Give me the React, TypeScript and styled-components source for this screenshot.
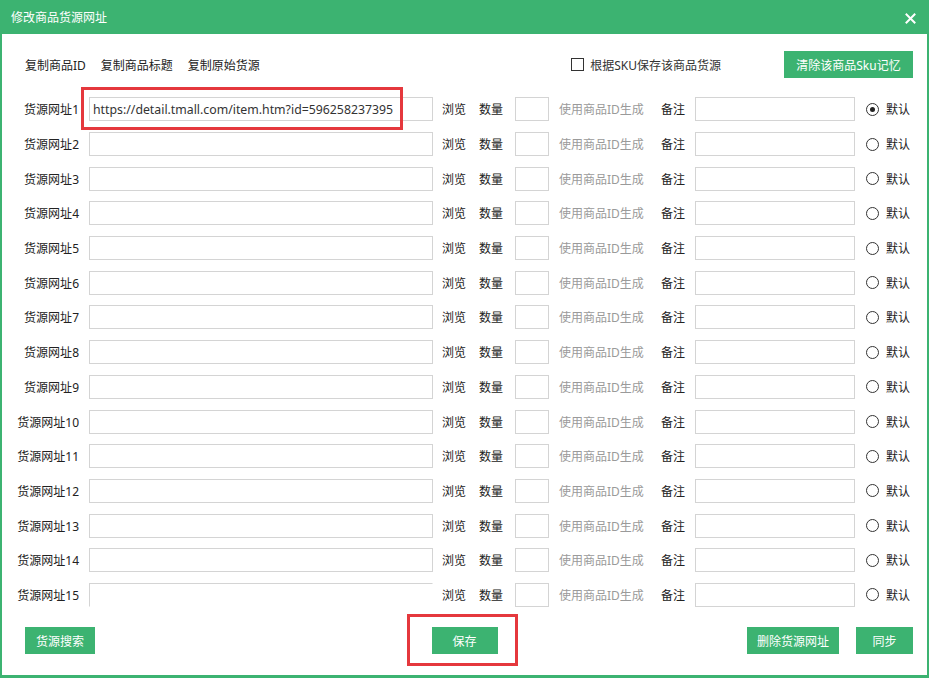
import React from 'react';
import styled, { createGlobalStyle } from 'styled-components';

const GlobalStyle = createGlobalStyle`
  html, body {
    margin: 0;
    padding: 0;
    background: #fff;
  }
  body {
    font-family: "Noto Sans", "Noto Sans CJK SC", sans-serif;
    font-size: 12px;
    color: #333;
  }
`;

const GREEN = '#3cb371';

const Window = styled.div`
  width: 929px;
  height: 678px;
  box-sizing: border-box;
  display: flex;
  flex-direction: column;
  background: ${GREEN};
  padding: 0 2px 3px 2px;
  overflow: hidden;
`;

const TitleBar = styled.div`
  height: 34px;
  flex-shrink: 0;
  display: flex;
  align-items: center;
  justify-content: space-between;
  padding: 0 11px 0 9px;
  color: #fff;
  font-size: 12px;
`;

const CloseButton = styled.div`
  width: 12px;
  height: 12px;
  display: flex;
  align-items: center;
  justify-content: center;
  margin-top: 2px;
`;

const Body = styled.div`
  flex: 1;
  background: #fff;
  display: flex;
  flex-direction: column;
`;

const Toolbar = styled.div`
  display: flex;
  align-items: center;
  height: 27px;
  margin-top: 17px;
  padding: 0 14px 0 23px;
`;

const CopyLinks = styled.div`
  display: flex;
  gap: 15px;
  flex: 1;
`;

const CopyLink = styled.span`
  color: #222;
  cursor: pointer;
`;

const CheckLabel = styled.label`
  display: flex;
  align-items: center;
  gap: 6px;
  margin-right: 63px;
  color: #333;
`;

const CheckBox = styled.span`
  width: 11px;
  height: 11px;
  border: 1px solid #333;
  background: #fff;
`;

const GreenButton = styled.button<{ $w: number }>`
  width: ${(p) => p.$w}px;
  height: 27px;
  border: none;
  background: ${GREEN};
  color: #fff;
  font-family: inherit;
  font-size: 12px;
  padding: 0;
  cursor: pointer;
`;

const Rows = styled.div`
  margin-top: 14px;
  display: flex;
  flex-direction: column;
`;

const Row = styled.div`
  position: relative;
  height: 34.7px;
  display: flex;
  align-items: center;
`;

const RowLabel = styled.span`
  width: 77px;
  padding-right: 1px;
  text-align: right;
  color: #222;
  flex-shrink: 0;
`;

const Field = styled.div<{ $w: number; $ml: number; $clipped?: boolean }>`
  width: ${(p) => p.$w}px;
  height: 24px;
  margin-left: ${(p) => p.$ml}px;
  box-sizing: border-box;
  flex-shrink: 0;
  border: 1px solid #d4d4d4;
  ${(p) => (p.$clipped ? 'border-right-color: transparent; border-bottom-color: transparent;' : '')}
  background: #fff;
  display: flex;
  align-items: center;
  padding-left: 3px;
  font-size: 12.3px;
  color: #333;
  white-space: nowrap;
  overflow: hidden;
`;

const RowText = styled.span<{ $w: number; $ml: number; $muted?: boolean }>`
  width: ${(p) => p.$w}px;
  margin-left: ${(p) => p.$ml}px;
  flex-shrink: 0;
  white-space: nowrap;
  color: ${(p) => (p.$muted ? '#9a9a9a' : '#222')};
`;

const Radio = styled.span<{ $checked?: boolean }>`
  width: 11px;
  height: 11px;
  margin-left: 11px;
  flex-shrink: 0;
  border: 1px solid #333;
  border-radius: 50%;
  display: flex;
  align-items: center;
  justify-content: center;

  &::after {
    content: '';
    width: 5px;
    height: 5px;
    border-radius: 50%;
    background: ${(p) => (p.$checked ? '#222' : 'transparent')};
  }
`;

const Highlight = styled.div`
  position: absolute;
  border: 3px solid #e5383d;
  pointer-events: none;
`;

const UrlHighlight = styled(Highlight)`
  left: 79px;
  top: -5px;
  width: 316px;
  height: 37px;
`;

const Footer = styled.div`
  margin-top: 15px;
  display: grid;
  grid-template-columns: 1fr auto 1fr;
  align-items: center;
  padding: 0 14px;
`;

const FooterLeft = styled.div`
  display: flex;
  padding-left: 9px;
`;

const FooterRight = styled.div`
  display: flex;
  justify-content: flex-end;
  gap: 17px;
`;

const SaveWrap = styled.div`
  position: relative;
  display: flex;
`;

const SaveHighlight = styled(Highlight)`
  left: -25px;
  top: -13px;
  width: 105px;
  height: 46px;
`;

const rows = Array.from({ length: 15 }, (_, i) => i + 1);

const App: React.FC = () => (
  <>
    <GlobalStyle />
    <Window>
      <TitleBar>
        <span>修改商品货源网址</span>
        <CloseButton>
          <svg width="11" height="11" viewBox="0 0 11 11">
            <path d="M1.5 1.5 L9.5 9.5 M9.5 1.5 L1.5 9.5" stroke="#fff" strokeWidth="2" strokeLinecap="square" />
          </svg>
        </CloseButton>
      </TitleBar>
      <Body>
        <Toolbar>
          <CopyLinks>
            <CopyLink>复制商品ID</CopyLink>
            <CopyLink>复制商品标题</CopyLink>
            <CopyLink>复制原始货源</CopyLink>
          </CopyLinks>
          <CheckLabel>
            <CheckBox />
            根据SKU保存该商品货源
          </CheckLabel>
          <GreenButton $w={129}>清除该商品Sku记忆</GreenButton>
        </Toolbar>

        <Rows>
          {rows.map((n) => (
            <Row key={n}>
              <RowLabel>货源网址{n}</RowLabel>
              <Field $w={344} $ml={9} $clipped={n === 15}>
                {n === 1 ? 'https://detail.tmall.com/item.htm?id=596258237395' : ''}
              </Field>
              <RowText $w={24} $ml={9}>浏览</RowText>
              <RowText $w={24} $ml={13}>数量</RowText>
              <Field $w={34} $ml={12} />
              <RowText $w={86} $ml={10} $muted>使用商品ID生成</RowText>
              <RowText $w={24} $ml={16}>备注</RowText>
              <Field $w={160} $ml={10} />
              <Radio $checked={n === 1} />
              <RowText $w={26} $ml={7}>默认</RowText>
              {n === 1 && <UrlHighlight />}
            </Row>
          ))}
        </Rows>

        <Footer>
          <FooterLeft>
            <GreenButton $w={70}>货源搜索</GreenButton>
          </FooterLeft>
          <SaveWrap>
            <GreenButton $w={66}>保存</GreenButton>
            <SaveHighlight />
          </SaveWrap>
          <FooterRight>
            <GreenButton $w={92}>删除货源网址</GreenButton>
            <GreenButton $w={57}>同步</GreenButton>
          </FooterRight>
        </Footer>
      </Body>
    </Window>
  </>
);

export default App;
